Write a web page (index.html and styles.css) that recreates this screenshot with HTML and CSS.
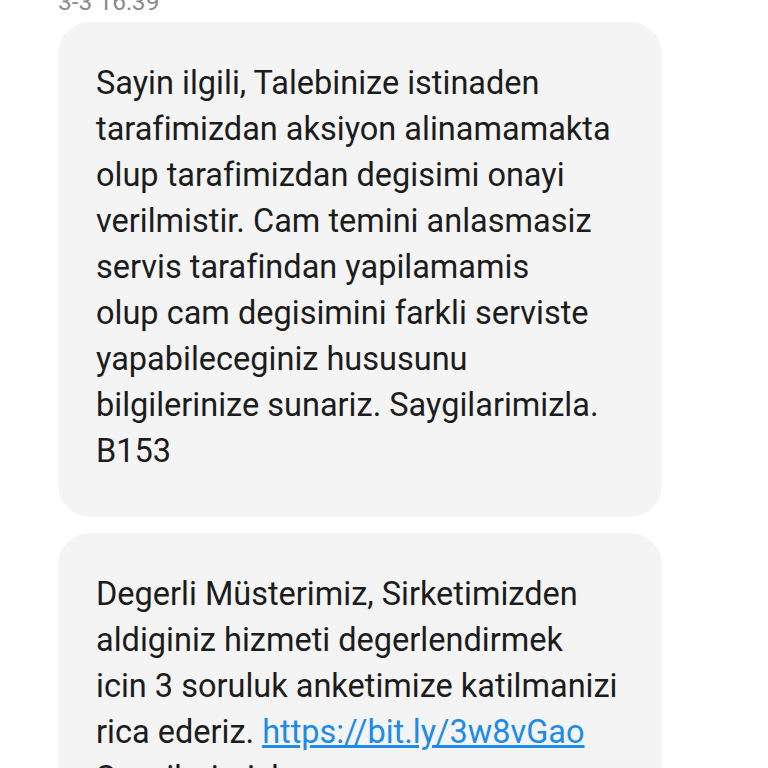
FILE: index.html
```html
<!DOCTYPE html>
<html lang="tr">
<head>
    <meta charset="UTF-8">
    <meta name="viewport" content="width=device-width, initial-scale=1.0">
    <title>Mesajlar</title>
    <link rel="stylesheet" href="styles.css">
</head>
<body>
    <main class="thread">
        <div class="time">3-3 16:39</div>

        <div class="bubble">
            Sayin ilgili, Talebinize istinaden<br>
            tarafimizdan aksiyon alinamamakta<br>
            olup tarafimizdan degisimi onayi<br>
            verilmistir. Cam temini anlasmasiz<br>
            servis tarafindan yapilamamis<br>
            olup cam degisimini farkli serviste<br>
            yapabileceginiz hususunu<br>
            bilgilerinize sunariz. Saygilarimizla.<br>
            B153
        </div>

        <div class="bubble">
            Degerli Müsterimiz, Sirketimizden<br>
            aldiginiz hizmeti degerlendirmek<br>
            icin 3 soruluk anketimize katilmanizi<br>
            rica ederiz. <a href="#" class="link">https://bit.ly/3w8vGao</a><br>
            Saygilarimizla.
        </div>
    </main>
</body>
</html>
```

FILE: styles.css
```css
body {
    margin: 0;
    background-color: #ffffff;
    font-family: Roboto, "Noto Sans", sans-serif;
    overflow: hidden;
}

.thread {
    padding-left: 58px;
    width: 604px;
}

.time {
    font-size: 24.5px;
    line-height: 26px;
    color: #8a8a8a;
    margin-top: -11px;
    margin-bottom: 7px;
}

.bubble {
    background-color: #f4f4f4;
    border-radius: 32px;
    padding: 38px 20px 43px 38px;
    font-size: 32.5px;
    line-height: 46px;
    color: #1c1c1c;
    margin-bottom: 16px;
}

.link {
    color: #1e8ce6;
    text-decoration: underline;
}
```
